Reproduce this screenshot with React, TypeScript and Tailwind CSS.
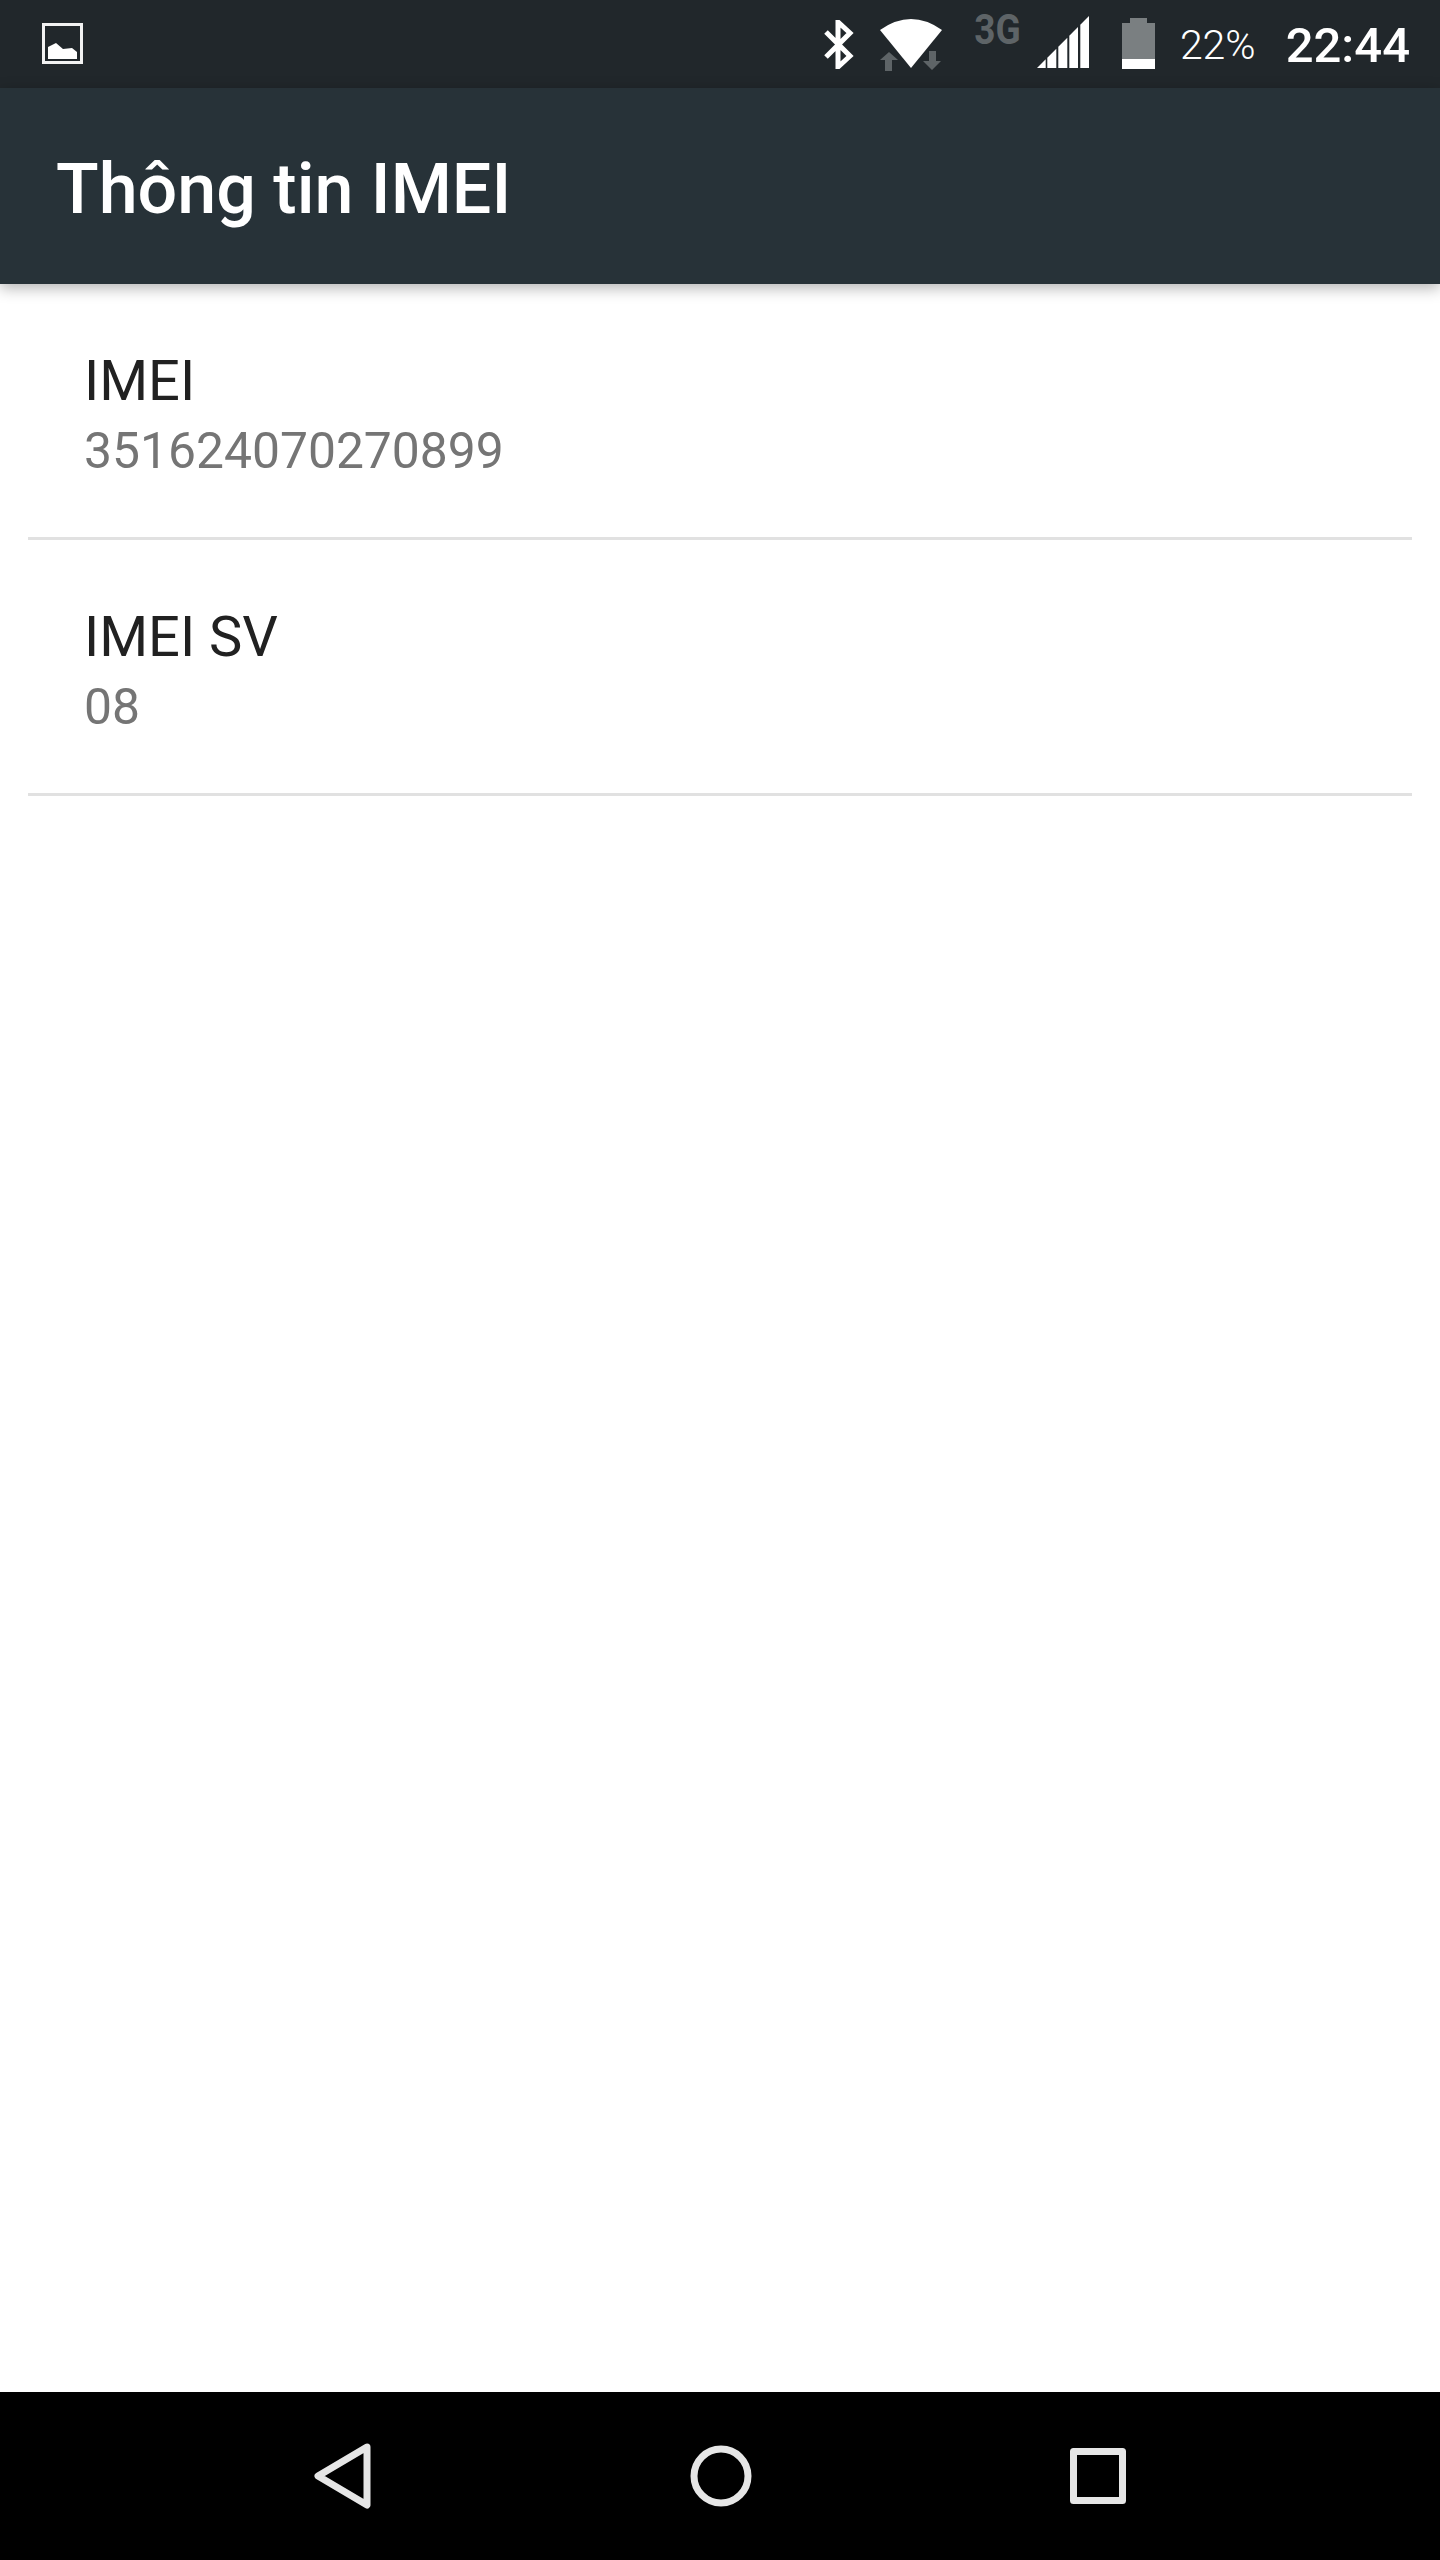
import React from 'react';

const BluetoothIcon = () => (
  <svg width="31" height="49" viewBox="0 0 31 49" fill="none" stroke="#fff" strokeWidth="5">
    <path d="M3 12 L27 36 L15 47 V2 L27 13 L3 37" />
  </svg>
);

const WifiIcon = () => (
  <svg width="62" height="52" viewBox="0 0 62 52">
    <path d="M0 11 Q31 -11 62 11 L31 49 Z" fill="#fff" />
    <path d="M9 33 L18 41 H12 V52 H5 V41 H0 Z" fill="#5e6467" />
    <path d="M49 32 H56 V42 H61 L52 51 L43 42 H49 Z" fill="#5e6467" />
  </svg>
);

const SignalIcon = () => (
  <svg width="52" height="52" viewBox="0 0 52 52" fill="#fff">
    <polygon points="0,52 8.7,43.3 8.7,52" />
    <polygon points="10.3,52 10.3,41.7 19.3,32.7 19.3,52" />
    <polygon points="21.3,52 21.3,30.7 30.3,21.7 30.3,52" />
    <polygon points="32.3,52 32.3,19.7 41,11 41,52" />
    <polygon points="43.3,52 43.3,8.7 52,0 52,52" />
  </svg>
);

const BatteryIcon = () => (
  <svg width="33" height="51" viewBox="0 0 33 51">
    <path d="M8 0 H25 V5 H33 V41 H0 V5 H8 Z" fill="#7a7f81" />
    <rect x="0" y="41" width="33" height="10" fill="#fff" />
  </svg>
);

const ImageIcon = () => (
  <svg width="41" height="41" viewBox="0 0 41 41">
    <rect x="1.5" y="1.5" width="38" height="38" fill="none" stroke="#f2f2f2" strokeWidth="3" />
    <path d="M6 36 V24 L14 20 L21 26 L30 25 L35 29 V36 Z" fill="#fff" />
  </svg>
);

const StatusBar = () => (
  <div className="flex h-[88px] items-start justify-between bg-[#21272b] pl-[42px] pr-[30px] text-white">
    <div className="mt-[23px]">
      <ImageIcon />
    </div>
    <div className="flex items-start">
      <div className="mt-[20px]">
        <BluetoothIcon />
      </div>
      <div className="ml-[26px] mt-[19px]">
        <WifiIcon />
      </div>
      <span className="ml-[29px] mt-[5px] w-[46px] scale-x-[0.86] text-[43px] leading-[48px] font-bold text-[#5e6467]">3G</span>
      <div className="ml-[20px] mt-[16px]">
        <SignalIcon />
      </div>
      <div className="ml-[33px] mt-[18px]">
        <BatteryIcon />
      </div>
      <span className="ml-[25px] mt-[21px] text-[41px] leading-[48px] font-light">22%</span>
      <span className="ml-[30px] mt-[18px] text-[49px] leading-[56px] font-medium">22:44</span>
    </div>
  </div>
);

const InfoRow = ({ title, value }: { title: string; value: string }) => (
  <div className="mx-[28px] h-[256px] border-b-[3px] border-[#e1e1e1] px-[56px] pt-[60px]">
    <div className="text-[56px] leading-[74px] text-[#212121]">{title}</div>
    <div className="text-[49.8px] leading-[66px] text-[#757575]">{value}</div>
  </div>
);

const NavBar = () => (
  <div className="flex h-[168px] items-center justify-center gap-[318px] bg-black">
    <svg width="58" height="66" viewBox="0 0 58 66" fill="none" stroke="#e6e6e6" strokeWidth="7" strokeLinejoin="round">
      <polygon points="53,4 4,33 53,62" />
    </svg>
    <svg width="62" height="62" viewBox="0 0 62 62" fill="none" stroke="#e6e6e6" strokeWidth="7">
      <circle cx="31" cy="31" r="27" />
    </svg>
    <svg width="56" height="56" viewBox="0 0 56 56" fill="none" stroke="#e6e6e6" strokeWidth="7" strokeLinejoin="round">
      <rect x="3.5" y="3.5" width="49" height="49" />
    </svg>
  </div>
);

export default function App() {
  return (
    <div className="flex min-h-[2560px] flex-col bg-white font-['Roboto',sans-serif]">
      <StatusBar />
      <div className="relative z-10 flex h-[196px] items-center bg-[#273238] pl-[56px] pt-[6px] shadow-[0_4px_14px_rgba(0,0,0,0.3)]">
        <h1 className="text-[70px] leading-[84px] font-medium text-white">Thông tin IMEI</h1>
      </div>
      <main className="flex-1">
        <InfoRow title="IMEI" value="351624070270899" />
        <InfoRow title="IMEI SV" value="08" />
      </main>
      <NavBar />
    </div>
  );
}
